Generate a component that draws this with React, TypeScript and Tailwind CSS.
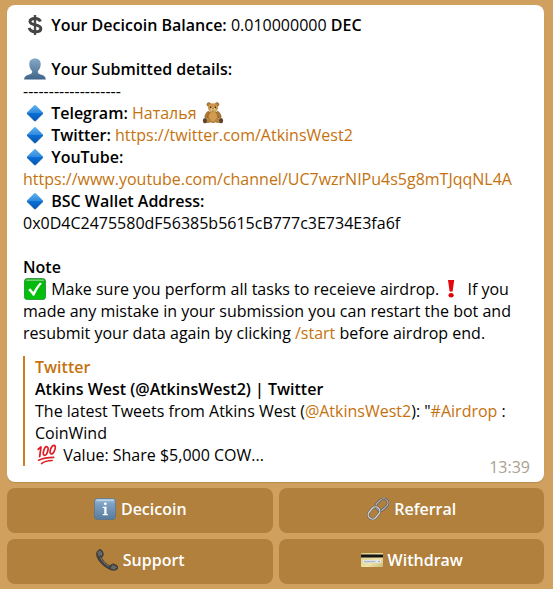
import type { ReactNode } from "react";

type EmojiProps = {
  label: string;
  children: ReactNode;
};

function Emoji({ label, children }: EmojiProps) {
  return (
    <svg
      role="img"
      aria-label={label}
      viewBox="0 0 22 22"
      className="mx-px inline-block h-[22px] w-[22px] shrink-0 align-top"
    >
      {children}
    </svg>
  );
}

function DollarIcon() {
  return (
    <Emoji label="Dollar">
      <path d="M11 1v20" stroke="#4a4a4a" strokeWidth="2.4" />
      <path
        d="M16.4 7.600C15.600 5.400 13.800 4.500 11 4.500c-3 0-5 1.200-5 3.100 0 4.500 10.800 2 10.800 6.800 0 2.200-2.200 3.400-5.600 3.400-3.200 0-5.300-1.300-6-3.900"
        fill="none"
        stroke="#444"
        strokeWidth="3"
      />
    </Emoji>
  );
}

function PersonIcon() {
  return (
    <Emoji label="Profile">
      <defs>
        <linearGradient id="person" x1="0" y1="0" x2="0" y2="1">
          <stop offset="0" stopColor="#86a9c7" />
          <stop offset="1" stopColor="#3f658b" />
        </linearGradient>
      </defs>
      <path
        d="M11 .5c3.8 0 5.9 2.3 5.7 6-.1 2.8-1.2 5.2-2.8 6.6-.2 1.6.2 2.3 1.5 2.8 3.4 1.2 6.3 1.8 6.4 5.6H.2c.1-3.8 3-4.4 6.4-5.6 1.3-.5 1.7-1.2 1.5-2.8C6.500 11.700 5.400 9.300 5.300 6.500 5.100 2.800 7.200.5 11 .5z"
        fill="url(#person)"
      />
    </Emoji>
  );
}

function DiamondIcon() {
  return (
    <Emoji label="Blue diamond">
      <defs>
        <linearGradient id="diamond" x1="0" y1="0" x2="0" y2="1">
          <stop offset="0" stopColor="#5eb2ef" />
          <stop offset="0.48" stopColor="#2f8be0" />
          <stop offset="0.52" stopColor="#0a6fd6" />
          <stop offset="1" stopColor="#0357b4" />
        </linearGradient>
      </defs>
      <path
        d="M10.300 3.300q.7-.6 1.400 0l7.200 7.100q.6.6 0 1.200l-7.200 7.100q-.7.600-1.400 0L3.100 11.600q-.6-.6 0-1.200z"
        fill="url(#diamond)"
      />
      <path d="M3 11.500l7.300 7.200q.7.600 1.400 0l7.300-7.200" fill="none" stroke="#064a96" strokeWidth="0.700" />
    </Emoji>
  );
}

function BearIcon() {
  return (
    <Emoji label="Teddy bear">
      <g fill="#b27d37" stroke="#80531f" strokeWidth="0.500">
        <circle cx="6.800" cy="2.500" r="1.900" />
        <circle cx="15" cy="2.500" r="1.900" />
        <ellipse cx="5.300" cy="12.800" rx="1.800" ry="3.700" transform="rotate(28 5.300 12.800)" />
        <ellipse cx="16.700" cy="12.800" rx="1.800" ry="3.700" transform="rotate(-28 16.700 12.800)" />
        <ellipse cx="11" cy="14.800" rx="5.300" ry="5.800" />
      </g>
      <ellipse cx="11" cy="14.600" rx="4.200" ry="4.800" fill="#cf9c51" />
      <ellipse cx="11" cy="5.800" rx="5" ry="4.600" fill="#c9954a" />
      <ellipse cx="11" cy="7.500" rx="2.600" ry="2" fill="#e7c683" />
      <circle cx="8.600" cy="5.200" r="0.700" fill="#2b1b0c" />
      <circle cx="13.400" cy="5.200" r="0.700" fill="#2b1b0c" />
      <path d="M10 6.400h2l-1 1.200z" fill="#2b1b0c" />
      <path d="M9.800 8.800q1.200.7 2.400 0" fill="none" stroke="#5e3b17" strokeWidth="0.500" />
      <ellipse cx="5.200" cy="18.700" rx="3.700" ry="2.400" fill="#b8833c" />
      <ellipse cx="16.800" cy="18.700" rx="3.700" ry="2.400" fill="#b8833c" />
      <ellipse cx="2.900" cy="18.600" rx="2" ry="2.700" fill="#5b432d" />
      <ellipse cx="19.100" cy="18.600" rx="2" ry="2.700" fill="#5b432d" />
    </Emoji>
  );
}

function CheckIcon() {
  return (
    <Emoji label="Done">
      <defs>
        <linearGradient id="check" x1="0" y1="0" x2="0" y2="1">
          <stop offset="0" stopColor="#16a51b" />
          <stop offset="0.200" stopColor="#05b80c" />
          <stop offset="1" stopColor="#02c40a" />
        </linearGradient>
      </defs>
      <rect x="0.400" y="0.400" width="21.200" height="21.200" rx="3.200" fill="url(#check)" stroke="#15862c" strokeWidth="0.800" />
      <path d="M2.600 2.300h16.800" stroke="#6ed473" strokeWidth="1.600" strokeLinecap="round" />
      <path d="M4.200 11.900l2.100-1.600 3 3.600c1.800-3.600 4-6.700 6.700-9.500l1.900 1.100c-3.200 3.700-5.600 7.700-7.600 12.200H9c-1.300-2.200-2.900-4.100-4.800-5.800z" fill="#fff" />
    </Emoji>
  );
}

function ExclamationIcon() {
  return (
    <Emoji label="Important">
      <path d="M8 2h6.200l-1.600 11.500H9.600z" fill="#e3060b" />
      <ellipse cx="11.100" cy="17.300" rx="2.600" ry="2.200" fill="#dc060b" />
    </Emoji>
  );
}

function HundredIcon() {
  return (
    <Emoji label="Hundred points">
      <g fill="none" stroke="#dc1f27" strokeLinecap="round" strokeLinejoin="round">
        <path d="M2.200 5.200L5 3 3.700 12.500" strokeWidth="1.800" />
        <ellipse cx="9.700" cy="7" rx="2" ry="4.500" transform="rotate(17 9.700 7)" strokeWidth="1.700" />
        <ellipse cx="16.700" cy="5.600" rx="2.100" ry="4.500" transform="rotate(20 16.700 5.600)" strokeWidth="1.700" />
        <path d="M2.600 16.200C7 14.300 12 13.500 17.700 13.400" strokeWidth="1.600" />
        <path d="M5.500 19.600C8 17.500 11.500 16.800 16.200 16.600" strokeWidth="1.500" />
      </g>
    </Emoji>
  );
}

function InfoIcon() {
  return (
    <Emoji label="Info">
      <defs>
        <linearGradient id="info" x1="0" y1="0" x2="0" y2="1">
          <stop offset="0" stopColor="#a5c2dd" />
          <stop offset="0.250" stopColor="#7fa2c4" />
          <stop offset="1" stopColor="#587b9d" />
        </linearGradient>
      </defs>
      <rect x="0.400" y="0.400" width="21.200" height="21.200" rx="3.300" fill="url(#info)" stroke="#55738f" strokeWidth="0.800" />
      <path d="M2.800 2.200h16.400" stroke="#b9d0e5" strokeWidth="1.400" strokeLinecap="round" />
      <circle cx="11.300" cy="5.800" r="1.400" fill="#fff" />
      <path d="M8.800 8.800h3.700v7.200h1.400v1.200H8.700V16h1.600v-6H8.800z" fill="#fff" />
    </Emoji>
  );
}

function PhoneIcon() {
  return (
    <Emoji label="Phone">
      <path
        d="M2.800.9C4.200-.1 5.700.8 6.600 2.600c.9 1.900 1.200 3.900 0 4.700-.9.600-1.100 1.300-.6 2.300 1.600 3 3.900 5.200 6.900 6.700 1 .5 1.700.2 2.300-.6.900-1.300 3-.9 4.800.2 1.800 1.100 2.600 2.700 1.400 4-1.200 1.500-4.300 1.900-6.900.8C7.600 17.700 2.300 12.300.7 6.700.1 4.300 1 2 2.800.9z"
        fill="#414141"
        stroke="#292929"
        strokeWidth="0.500"
      />
      <path d="M3.400 2C5.200 2.700 5.900 4.300 5.600 6.400M4.500 8.500c1.700 4 4.700 7 8.600 8.800M16 17c1.800-.3 3.500.600 4.600 2" fill="none" stroke="#858585" strokeWidth="0.900" />
      <ellipse cx="3.300" cy="4.600" rx="1.500" ry="2.500" transform="rotate(-12 3.300 4.600)" fill="#686868" />
      <ellipse cx="17.300" cy="18.900" rx="2.500" ry="1.500" transform="rotate(12 17.300 18.900)" fill="#686868" />
    </Emoji>
  );
}

function LinkIcon() {
  return (
    <Emoji label="Link">
      <g fill="none">
        <rect x="-6.600" y="-4.300" width="13.200" height="8.600" rx="4.300" transform="translate(15 6.600) rotate(-43)" stroke="#5c5b5d" strokeWidth="2.600" />
        <rect x="-6.600" y="-4.300" width="13.200" height="8.600" rx="4.300" transform="translate(15 6.600) rotate(-43)" stroke="#b6b6bb" strokeWidth="1.200" />
        <rect x="-6.600" y="-4.300" width="13.200" height="8.600" rx="4.300" transform="translate(7 15) rotate(-50)" stroke="#626164" strokeWidth="2.600" />
        <rect x="-6.600" y="-4.300" width="13.200" height="8.600" rx="4.300" transform="translate(7 15) rotate(-50)" stroke="#d2d2d6" strokeWidth="1.300" />
      </g>
    </Emoji>
  );
}

function CardIcon() {
  return (
    <Emoji label="Bank card">
      <defs>
        <linearGradient id="card" x1="0" y1="0" x2="1" y2="1">
          <stop offset="0" stopColor="#d8cd8b" />
          <stop offset="0.600" stopColor="#eee3a9" />
          <stop offset="1" stopColor="#c9b971" />
        </linearGradient>
      </defs>
      <rect x="0" y="4" width="22" height="14" rx="0.800" fill="url(#card)" />
      <path d="M0 7h22" stroke="#151515" strokeWidth="3" />
      <path d="M2 12.500h18" stroke="#e4e6e3" strokeWidth="3" />
      <path d="M3 13l1.500-1 1 1.300L7 12l1 1 1.500-1 1 1.200L12 12l1.300 1 1.200-.8M17 12.500h2" fill="none" stroke="#7791bd" strokeWidth="0.700" />
    </Emoji>
  );
}

const LINK = "text-[#c5720e] hover:underline";

const DETAILS: { label: string; value: ReactNode }[] = [
  {
    label: "Telegram",
    value: (
      <>
        <a href="#telegram" className={LINK}>Наталья</a> <BearIcon />
      </>
    ),
  },
  {
    label: "Twitter",
    value: <a href="https://twitter.com/AtkinsWest2" className={LINK}>https://twitter.com/AtkinsWest2</a>,
  },
  {
    label: "YouTube",
    value: (
      <a href="https://www.youtube.com/channel/UC7wzrNIPu4s5g8mTJqqNL4A" className={LINK}>
        https://www.youtube.com/channel/UC7wzrNIPu4s5g8mTJqqNL4A
      </a>
    ),
  },
  { label: "BSC Wallet Address", value: "0x0D4C2475580dF56385b5615cB777c3E734E3fa6f" },
];

const KEYBOARD = [
  { label: "Decicoin", icon: <InfoIcon /> },
  { label: "Referral", icon: <LinkIcon /> },
  { label: "Support", icon: <PhoneIcon /> },
  { label: "Withdraw", icon: <CardIcon /> },
];

export default function App() {
  return (
    <main className="min-h-screen bg-[#d0a15e] pt-[5px] pr-[9px] pb-[5px] pl-[7px] font-['Open_Sans','Noto_Sans',sans-serif] text-base leading-[22px] text-black">
      <article className="rounded-lg bg-white pt-[9px] pr-[14px] pb-1 pl-4 shadow-[0_1px_1px_#b58a4d]">
        <p>
          <DollarIcon /> <b className="font-semibold">Your Decicoin Balance:</b> 0.010000000{" "}
          <b className="font-semibold">DEC</b>
        </p>

        <h2 className="mt-[22px] font-semibold">
          <PersonIcon /> Your Submitted details:
        </h2>
        <p>-------------------</p>
        {DETAILS.map(({ label, value }) => (
          <p key={label} className="wrap-break-word">
            <DiamondIcon /> <b className="font-semibold">{label}:</b> {value}
          </p>
        ))}

        <h2 className="mt-[22px] font-semibold">Note</h2>
        <p>
          <CheckIcon /> Make sure you perform all tasks to receieve airdrop.
          <ExclamationIcon /> If you made any mistake in your submission you can restart the bot and
          resubmit your data again by clicking <a href="#start" className={LINK}>/start</a> before
          airdrop end.
        </p>

        <blockquote className="mt-3 border-l-2 border-[#cd7f20] pl-[10px]">
          <p className="font-semibold text-[#c5720e]">Twitter</p>
          <p className="font-semibold">Atkins West (@AtkinsWest2) | Twitter</p>
          <p>
            The latest Tweets from Atkins West (
            <a href="https://twitter.com/AtkinsWest2" className={LINK}>@AtkinsWest2</a>): "
            <a href="#airdrop" className={LINK}>#Airdrop</a> :
            <br />
            CoinWind
          </p>
          <p>
            <HundredIcon /> Value: Share $5,000 COW...
          </p>
        </blockquote>
        <time className="-mt-[10px] block text-right text-[#aaa093]">13:39</time>
      </article>

      <div className="mt-[6px] grid grid-cols-2 gap-[6px]">
        {KEYBOARD.map(({ label, icon }) => (
          <button
            key={label}
            type="button"
            className="flex h-[45px] items-center justify-center gap-1 rounded-lg bg-[#b0803c] pb-1 font-semibold text-white hover:bg-[#a67735]"
          >
            {icon}
            {label}
          </button>
        ))}
      </div>
    </main>
  );
}
